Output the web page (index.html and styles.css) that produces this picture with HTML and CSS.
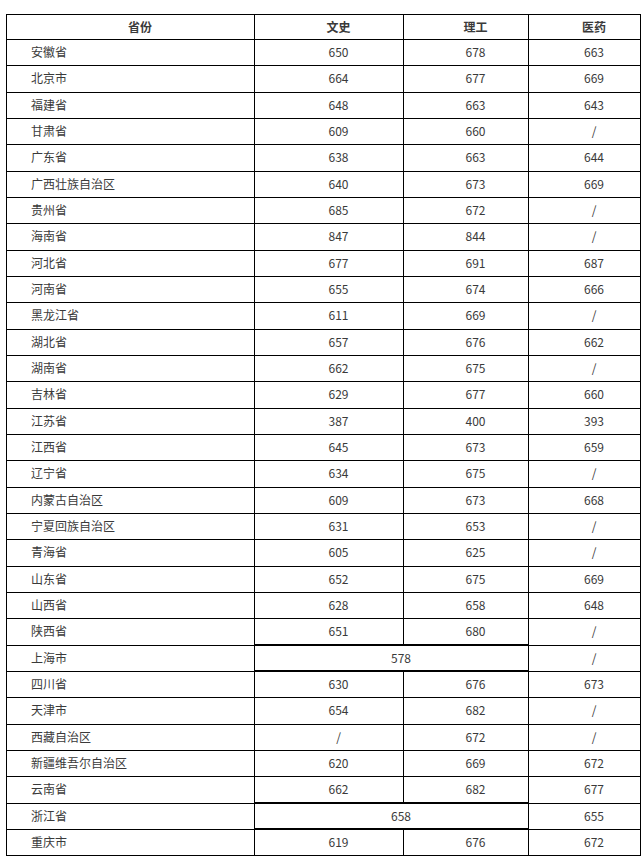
FILE: index.html
```html
<!DOCTYPE html>
<html lang="zh-CN">
<head>
<meta charset="utf-8">
<link rel="stylesheet" href="styles.css">
</head>
<body>
<table class="scores">
<colgroup><col class="c1"><col class="c2"><col class="c3"><col class="c4"></colgroup>
<thead>
<tr class="head"><th class="left">省份</th><th>文史</th><th>理工</th><th>医药</th></tr>
</thead>
<tbody>
<tr><td class="left">安徽省</td><td>650</td><td>678</td><td>663</td></tr>
<tr><td class="left">北京市</td><td>664</td><td>677</td><td>669</td></tr>
<tr><td class="left">福建省</td><td>648</td><td>663</td><td>643</td></tr>
<tr><td class="left">甘肃省</td><td>609</td><td>660</td><td>/</td></tr>
<tr><td class="left">广东省</td><td>638</td><td>663</td><td>644</td></tr>
<tr><td class="left">广西壮族自治区</td><td>640</td><td>673</td><td>669</td></tr>
<tr><td class="left">贵州省</td><td>685</td><td>672</td><td>/</td></tr>
<tr><td class="left">海南省</td><td>847</td><td>844</td><td>/</td></tr>
<tr><td class="left">河北省</td><td>677</td><td>691</td><td>687</td></tr>
<tr><td class="left">河南省</td><td>655</td><td>674</td><td>666</td></tr>
<tr><td class="left">黑龙江省</td><td>611</td><td>669</td><td>/</td></tr>
<tr><td class="left">湖北省</td><td>657</td><td>676</td><td>662</td></tr>
<tr><td class="left">湖南省</td><td>662</td><td>675</td><td>/</td></tr>
<tr><td class="left">吉林省</td><td>629</td><td>677</td><td>660</td></tr>
<tr><td class="left">江苏省</td><td>387</td><td>400</td><td>393</td></tr>
<tr><td class="left">江西省</td><td>645</td><td>673</td><td>659</td></tr>
<tr><td class="left">辽宁省</td><td>634</td><td>675</td><td>/</td></tr>
<tr><td class="left">内蒙古自治区</td><td>609</td><td>673</td><td>668</td></tr>
<tr><td class="left">宁夏回族自治区</td><td>631</td><td>653</td><td>/</td></tr>
<tr><td class="left">青海省</td><td>605</td><td>625</td><td>/</td></tr>
<tr><td class="left">山东省</td><td>652</td><td>675</td><td>669</td></tr>
<tr><td class="left">山西省</td><td>628</td><td>658</td><td>648</td></tr>
<tr><td class="left">陕西省</td><td>651</td><td>680</td><td>/</td></tr>
<tr><td class="left">上海市</td><td class="merged" colspan="2">578</td><td>/</td></tr>
<tr><td class="left">四川省</td><td>630</td><td>676</td><td>673</td></tr>
<tr><td class="left">天津市</td><td>654</td><td>682</td><td>/</td></tr>
<tr><td class="left">西藏自治区</td><td>/</td><td>672</td><td>/</td></tr>
<tr><td class="left">新疆维吾尔自治区</td><td>620</td><td>669</td><td>672</td></tr>
<tr><td class="left">云南省</td><td>662</td><td>682</td><td>677</td></tr>
<tr><td class="left">浙江省</td><td class="merged" colspan="2">658</td><td>655</td></tr>
<tr><td class="left">重庆市</td><td>619</td><td>676</td><td>672</td></tr>
</tbody>
</table>
</body>
</html>
```

FILE: styles.css
```css
html, body {
  margin: 0;
  padding: 0;
  background: #ffffff;
}
body {
  font-family: "Noto Sans CJK SC", "Noto Sans", sans-serif;
  font-size: 12px;
  color: #3a3a3a;
}
.scores {
  border-collapse: collapse;
  table-layout: fixed;
  width: 634px;
  margin: 14px 0 0 6px;
}
.c1 { width: 248px; }
.c2 { width: 149px; }
.c3 { width: 125px; }
.c4 { width: 112px; }
.scores th,
.scores td {
  border: 1px solid #000000;
  padding: 0 5px 1px 24px;
  text-align: center;
  vertical-align: middle;
  line-height: 16px;
  white-space: nowrap;
}
.scores th {
  font-weight: bold;
}
.scores td.left {
  text-align: left;
}
.scores tr {
  height: 26.33px;
}
.scores tr.head {
  height: 25px;
}
.scores td.merged {
  border-top: 2px solid #000000;
  border-bottom: 2px solid #000000;
}
```
